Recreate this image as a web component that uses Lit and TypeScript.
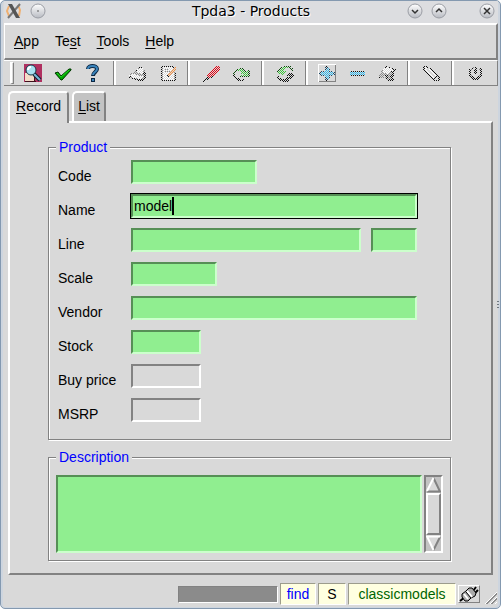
import { LitElement, html, svg, css, nothing, SVGTemplateResult } from "lit";
import { customElement, property, state } from "lit/decorators.js";
import { classMap } from "lit/directives/class-map.js";

interface Icon {
  label: string;
  art: SVGTemplateResult;
  off?: boolean;
}

const palette: Record<string, string> = {
  k: "#101010", g: "#8a8a8a", w: "#fff", r: "#e00010", G: "#38c838", D: "#104810",
  c: "#28b8f0", b: "#184868", o: "#f89040",
};

// Disabled icons are stippled: cell i of row y is the pixel at x = 2i + (y odd).
function stipple(top: number, rows: string[]): SVGTemplateResult {
  const paths = new Map<string, string>();
  rows.forEach((row, r) => {
    const y = top + r;
    [...row].forEach((c, i) => {
      if (c !== ".") paths.set(c, (paths.get(c) ?? "") + `M${2 * i + (y % 2)} ${y}h1v1h-1z`);
    });
  });
  return svg`${[...paths].map(([c, d]) => svg`<path d=${d} fill=${palette[c]}/>`)}`;
}

const find = svg`
  <rect x="1" y="1" width="18" height="18" fill="#b03060"/>
  <path d="M2 10h9v8H2z" fill="#f4dcc8"/><path d="M2 18.500h11M11.500 14v4" stroke="#40101c" fill="none"/>
  <path d="M11 11l6 6" stroke="#10202c" stroke-width="4"/>
  <path d="M11 11l6 6" stroke="#78b4d8" stroke-width="2"/>
  <circle cx="8" cy="7" r="5" fill="#a8e0f0" stroke="#183848"/>
  <path d="M5 7c0-2 1-3 3-3" stroke="#fff" stroke-width="2" fill="none"/>`;
const check = svg`
  <path d="M2 10l3-1 3 4 8-7h2v1L9 17H8z" fill="#00a800" stroke="#003800"/>
  <path d="M4 10l4 4 8-7" stroke="#20d020" fill="none"/>`;
const help = svg`
  <path d="M5 6c0-4 9-4 9 0 0 3-4 3-4 7" fill="none" stroke="#0c2844" stroke-width="4"/>
  <path d="M5 6c0-4 9-4 9 0 0 3-4 3-4 6" fill="none" stroke="#3a84bc" stroke-width="2"/>
  <path d="M8 15h4v4H8z" fill="#0c2844"/><path d="M9 16h2v2H9z" fill="#3a84bc"/>`;
const printer = stipple(4, [
  "......kk..", ".....gww..", ".....www..", "....kwwwg.", "....gwwwg.", "...ggwwwk.", "..gggggwkk",
  ".gwwggggk.", ".wwwwwgggk", ".kwwwwwwk.", ".kgwwwwwgk", "..kkgwwgk.", "....kkkkk.", ".....kkk..",
]);
const note = stipple(3, [
  "..kkkkkk..", "..kwwwwwko", "..gwwwwwo.", "..kwggwwoo", "..gwwwwoo.", "..kwgggoo.", "..gwwwoog.",
  "..kwwwoowk", "..gwwoowg.", "..kwwkowwk", "..gwwkwwg.", "..kwwwwwwk", "..gwwwwwg.", "..kwwwwwwk", "..kkkkkkk.",
]);
const redPen = stipple(3, [
  ".......rr.", ".......rrr", "......rrr.", "......rrrr", ".....rrrr.", ".....rrrr.", "....rrrr..",
  "....rrrr..", "...rrrr...", "...rrrr...", "...rrk....", "...krk....", "..kk......", "..kk......",
  ".k........", ".k........",
]);
const restore = stipple(5, [
  "....DD....", "...DGGD...", "..DGGGD.D.", "..D..GGDGD", ".D...GGGD.", ".D...GGGGD", ".D....GGD.",
  ".k...GGGGD", ".k..DDDDD.", "..k.......", "..kk......", "...kk.k...", "...kkk....",
]);
const refresh = stipple(3, [
  "....DDDD..", "...DGGGD..", "..DGG..DD.", "..DGG...D.", ".DGG....D.", ".DGGGG....", ".GGGG.....",
  "..GGG..kk.", "...G..kkk.", "......kkkk", ".k.....kk.", ".k....kkk.", ".kk..kkk..", "..kkkkk...",
  "..kkkkk...", "....kkk...",
]);
const plus = stipple(3, [
  "....k.....", "....bb....", "....bc....", "....bcb...", "....cc....", "..bbccbb..", ".bccccccb.",
  ".bccccccb.", ".bccccccb.", "..bbccbb..", "....cc....", "....bcb...", "....bc....", "....bb....",
  "....k.....",
]);
const minus = stipple(8, ["..kkkkkkk.", ".cccccccc.", "..ccccccc.", ".cccccccc.", "..kkkkkkk."]);
const picture = stipple(3, [
  "....k.....", "....kwk...", "...wwwwk..", "...wwwwwkk", "..gwwwwwk.", "..gwwwwkk.", "..gwwwgk..",
  "..gggwggk.", ".ggggggk..", ".gggkkgkk.", ".gg.kgkk..", ".kgggkgk..", "....kggk..", ".....gkkk.",
  ".....kkk..",
]);
const eraser = stipple(3, [
  ".kk.......", ".kwk......", ".kw.k.....", ".kw.wk....", ".kw.wk....", "..kw.wk...", "..kw.wk...",
  "...kw.wk..", "...kw.wk..", "....kw.wk.", "....kw.kk.", ".....kwk.k", ".....kk.k.", "......k..k",
  "......kkk.",
]);
const power = stipple(4, [
  "....gk....", "...k.k.k..", "..kg.k.gk.", "..k.kk.k..", "..k..k..k.", "..k.kk.k..", "..k..k..k.",
  "..k....k..", "..kg...gk.", "..kk..kk..", "...kk.kk..", "...kkkk...", "....kkk...",
]);
const frame = svg`
  <path d="M1 1h18v1H2v17H1z" fill="#fff"/><path d="M18 2h1v17H2v-1h16z" fill="#828282"/>`;

const groups: Icon[][] = [
  [{ label: "Find", art: find }, { label: "Execute", art: check }, { label: "Help", art: help }],
  [{ label: "Print", art: printer, off: true }, { label: "Note", art: note, off: true }],
  [{ label: "Edit", art: redPen, off: true }, { label: "Restore", art: restore, off: true }],
  [{ label: "Reload", art: refresh, off: true }],
  [{ label: "Add", art: plus, off: true }, { label: "Remove", art: minus, off: true }, { label: "Attach", art: picture, off: true }],
  [{ label: "Clear", art: eraser, off: true }],
  [{ label: "Quit", art: power, off: true }],
];

const menus = [["", "A", "pp"], ["Te", "s", "t"], ["", "T", "ools"], ["", "H", "elp"]];

@customElement("title-bar")
class TitleBar extends LitElement {
  @property() heading = "";

  static styles = css`
    :host {
      display: grid;
      grid-template-columns: 1fr auto 1fr;
      align-items: center;
      height: 22px;
      background: #dcdde0;
      font: 14px/20px "DejaVu Sans", sans-serif;
      color: #000;
    }
    h1 { margin: 0; padding-bottom: 2px; font: inherit; text-shadow: 1px 1px #fff; }
    .side { display: flex; align-items: center; gap: 8px; padding: 0 2px 2px; }
    .end { justify-content: flex-end; padding-right: 3px; }
    .gap { width: 16px; }
    button {
      width: 16px; height: 16px; padding: 0; border: 0; background: none;
      display: block; flex: none;
    }
    svg { display: block; }
  `;

  private round(label: string, glyph: SVGTemplateResult) {
    return html`<button aria-label=${label}>
      <svg width="16" height="16" viewBox="0 0 16 16">
        <defs><linearGradient id="g" x2="0" y2="1">
          <stop stop-color="#fff"/><stop offset="1" stop-color="#b8bbc2"/>
        </linearGradient></defs>
        <circle cx="8" cy="8" r="7" fill="url(#g)" stroke="#9a9da4"/>
        <g fill="none" stroke="#333" stroke-width="1.500">${glyph}</g>
      </svg></button>`;
  }

  render() {
    return html`
      <div class="side">
        <svg width="16" height="16" viewBox="0 0 16 16" aria-hidden="true">
          <path d="M3 3L1 8l2 5M12 2l2 5-1 6" fill="none" stroke="#f0b070" stroke-width="2"/>
          <path d="M14 1L2 15" stroke="#777" stroke-width="2"/>
          <path d="M2 1h4l8 14h-4z" fill="#555"/>
        </svg>
        ${this.round("Window menu", svg`<path d="M7.500 8h1"/>`)}
      </div>
      <h1>${this.heading}</h1>
      <div class="side end">
        ${this.round("Minimize", svg`<path d="M5 7l3 3 3-3"/>`)}
        ${this.round("Maximize", svg`<path d="M5 9l3-3 3 3"/>`)}
        <span class="gap"></span>
        ${this.round("Close", svg`<path d="M5 5l6 6M11 5l-6 6"/>`)}
      </div>`;
  }
}

@customElement("tool-strip")
class ToolStrip extends LitElement {
  static styles = css`
    :host {
      display: flex;
      height: 24px;
      border: solid;
      border-width: 1px 1px 1px 0;
      border-color: #fff #828282 #828282;
    }
    .handle {
      width: 1px;
      margin: 1px 4px 1px 6px;
      border: solid;
      border-width: 1px 1px 1px 2px;
      border-color: #fff #828282 #828282 #fff;
    }
    .group { display: flex; padding: 0 5px 0 0; }
    .group + .group { border-left: 1px solid #828282; box-shadow: inset 2px 0 #fff; padding-left: 8px; }
    .group + .group.trio { padding-left: 6px; }
    button {
      width: 30px; height: 24px; padding: 0; border: 0; background: none;
      display: grid; place-items: center;
    }
    svg { display: block; }
    .off svg { shape-rendering: crispEdges; }
  `;

  private icon(item: Icon) {
    return html`<button class=${classMap({ off: !!item.off })} aria-label=${item.label} ?disabled=${item.off}>
      <svg width="20" height="20" viewBox="0 0 20 20">${item.label === "Add" ? frame : nothing}${item.art}</svg>
    </button>`;
  }

  render() {
    return html`<span class="handle"></span>
      ${groups.map((g) => html`<div class=${classMap({ group: true, trio: g.length === 3 })}>
        ${g.map((item) => this.icon(item))}
      </div>`)}`;
  }
}

@customElement("app-root")
class AppRoot extends LitElement {
  @state() private tab = "Record";

  static styles = css`
    :host {
      display: block;
      font: 14px/18px "Liberation Sans", sans-serif;
      color: #000;
      background: #fff;
    }
    .window {
      box-sizing: border-box;
      min-height: 100vh;
      display: flex;
      flex-direction: column;
      position: relative;
      border: 1px solid #8499b0;
      border-radius: 5px;
      background: #d9d9d9;
      box-shadow: inset 2px 0 #cdd5df, inset -2px -1px #cdd5df;
      padding: 0 2px 2px 3px;
      overflow: hidden;
    }
    button, input, textarea { font: inherit; color: inherit; border-radius: 0; margin: 0; }
    u { text-underline-offset: 2px; }

    .menu {
      display: flex;
      height: 33px;
      padding-left: 1px;
      border: 2px solid;
      border-color: #fff #828282 #828282 #fff;
      border-left-width: 1px;
    }
    .menu button { border: 0; background: none; padding: 0 8px 2px; }

    .tabs { display: flex; gap: 3px; padding: 5px 4px 0; }
    .tab {
      height: 30px;
      padding: 0 4px 2px;
      border: 2px solid;
      border-color: #fff #828282 transparent #fff;
      border-bottom: 0;
      border-radius: 5px 4px 0 0;
      background: #c3c3c3;
    }
    .tab.on {
      background: #d9d9d9;
      height: 32px;
      padding: 0 6px 4px;
      margin-bottom: -2px;
      position: relative;
    }
    .panel {
      flex: 1;
      margin: 0 5px 0 4px;
      padding: 15px 40px 10px 38px;
      border: 2px solid;
      border-color: #fff #828282 #828282 #fff;
    }
    fieldset {
      margin: 0 0 8px;
      min-width: 0;
      padding: 4px 7px 17px;
      border: 1px solid #828282;
      box-shadow: 1px 1px #fff, inset 1px 1px #fff;
    }
    fieldset.desc { padding: 9px 7px 7px; margin: 0; }
    legend { color: #00f; background: #d9d9d9; padding: 0 3px; line-height: 18px; }

    .rows { display: grid; gap: 10px; padding: 0 26px 0 2px; }
    .row { display: grid; grid-template-columns: 73px 1fr; height: 24px; }
    .row label { padding-top: 7px; }
    .cell { display: flex; gap: 10px; position: relative; min-width: 0; }
    .entry, textarea {
      box-sizing: border-box;
      background: #90ee90;
      border: 2px solid;
      border-color: #568f56 #ccffcc #ccffcc #568f56;
      outline: 0;
      min-width: 0;
    }
    .entry { height: 24px; padding: 0 1px; }
    .full { flex: 1; }
    .code { width: 126px; }
    .scale { width: 86px; }
    .short { width: 70px; }
    .id { width: 46px; }
    .plain { background: #d9d9d9; border-color: #828282 #fff #fff #828282; }
    .focus { outline: 1px solid #000; }
    .caret { position: absolute; left: 41px; top: 3px; width: 2px; height: 18px; background: #000; }

    .memo { display: flex; gap: 2px; height: 78px; }
    textarea { flex: 1; resize: none; height: 78px; padding: 1px; overflow: hidden; }
    .scroll {
      box-sizing: border-box;
      width: 19px;
      display: flex;
      flex-direction: column;
      border: 2px solid;
      border-color: #828282 #fff #fff #828282;
      background: #c3c3c3;
    }
    .scroll button { padding: 0; border: 0; background: none; height: 16px; }
    .scroll svg { display: block; }
    .thumb { flex: 1; border: 2px solid; border-color: #fff #828282 #828282 #fff; background: #d9d9d9; }

    .status {
      display: flex;
      justify-content: flex-end;
      align-items: center;
      gap: 2px;
      padding: 8px 0 1px;
    }
    .bar { width: 98px; height: 15px; background: #8b8b8b; border: 1px solid; border-color: #828282 #fff #fff #828282; }
    .flag {
      box-sizing: border-box;
      height: 22px;
      line-height: 20px;
      text-align: center;
      background: #ffffe0;
      border: 1px solid;
      border-color: #9c9c8c #fff #fff #9c9c8c;
    }
    .mode { width: 36px; color: #00f; }
    .mark { width: 28px; }
    .db { width: 108px; color: #006400; }
    .plug { width: 22px; height: 18px; box-sizing: border-box; border: 1px solid; border-color: #fff #828282 #828282 #fff; }
    .plug svg, .grip { display: block; }
    .grip { margin-left: 2px; align-self: flex-end; }
    .dots { position: absolute; right: 0; top: 50%; margin-top: -4px; }
  `;

  private row(id: string, label: string, size: string, extra: unknown = nothing, value = "") {
    return html`<div class="row">
      <label for=${id}>${label}</label>
      <div class="cell"><input id=${id} class="entry ${size}" .value=${value}>${extra}</div>
    </div>`;
  }

  private tabButton(name: string) {
    return html`<button role="tab" class=${classMap({ tab: true, on: this.tab === name })}
      aria-selected=${this.tab === name} @click=${() => (this.tab = name)}><u>${name[0]}</u>${name.slice(1)}</button>`;
  }

  render() {
    return html`<div class="window">
      <title-bar heading="Tpda3 - Products"></title-bar>
      <nav class="menu">
        ${menus.map(([a, b, c]) => html`<button>${a}<u>${b}</u>${c}</button>`)}
      </nav>
      <tool-strip></tool-strip>
      <div class="tabs" role="tablist">${this.tabButton("Record")}${this.tabButton("List")}</div>
      <main class="panel">
        <fieldset>
          <legend>Product</legend>
          <div class="rows">
            ${this.row("code", "Code", "code")}
            ${this.row("name", "Name", "full focus", html`<span class="caret"></span>`, "model")}
            ${this.row("line", "Line", "full", html`<input class="entry id" aria-label="Line id">`)}
            ${this.row("scale", "Scale", "scale")}
            ${this.row("vendor", "Vendor", "full")}
            ${this.row("stock", "Stock", "short")}
            ${this.row("price", "Buy price", "short plain")}
            ${this.row("msrp", "MSRP", "short plain")}
          </div>
        </fieldset>
        <fieldset class="desc">
          <legend>Description</legend>
          <div class="memo">
            <textarea aria-label="Description"></textarea>
            <div class="scroll">
              <button aria-label="Scroll up"><svg width="15" height="16" viewBox="0 0 15 16">
                <path d="M7.500 2L1 15h13z" fill="#d9d9d9"/>
                <path d="M1 14.500h13L7.500 1" fill="none" stroke="#828282" stroke-width="2"/>
                <path d="M7.500 1L1 14" stroke="#fff" stroke-width="2"/></svg></button>
              <div class="thumb"></div>
              <button aria-label="Scroll down"><svg width="15" height="16" viewBox="0 0 15 16">
                <path d="M1 1h13L7.500 14z" fill="#d9d9d9"/>
                <path d="M14 2L7.500 15" stroke="#828282" stroke-width="2"/>
                <path d="M14 1.500H1L7.500 15" fill="none" stroke="#fff" stroke-width="2"/></svg></button>
            </div>
          </div>
        </fieldset>
      </main>
      <footer class="status">
        <div class="bar"></div>
        <div class="flag mode">find</div>
        <div class="flag mark">S</div>
        <div class="flag db">classicmodels</div>
        <div class="plug"><svg width="20" height="16" viewBox="0 0 20 16">
          <path d="M1 15l5-4M14 5l3-4M16 7l3-3" stroke="#000" stroke-width="2"/>
          <path d="M3 8l4-3 3-3h3l4 5-1 3-4 2-3 3H6l-3-4z" fill="#aaa" stroke="#000"/>
          <path d="M5 8l4 5M8 5l5 6" stroke="#fff" stroke-width="2"/><path d="M7 6l5 6" stroke="#000"/></svg></div>
        <svg class="grip" width="14" height="14" viewBox="0 0 14 14" aria-hidden="true">
          <path d="M1 13L13 1M6 13l7-7M11 13l2-2" stroke="#fff"/>
          <path d="M2 13L13 2M3 13L13 3M7 13l6-6M8 13l5-5" stroke="#8c8c8c"/></svg>
      </footer>
      <svg class="dots" width="3" height="8" viewBox="0 0 3 8" aria-hidden="true">
        <path d="M0 0h2v1H0zM0 3h2v1H0zM0 6h2v1H0z" fill="#707880"/></svg>
    </div>`;
  }
}
